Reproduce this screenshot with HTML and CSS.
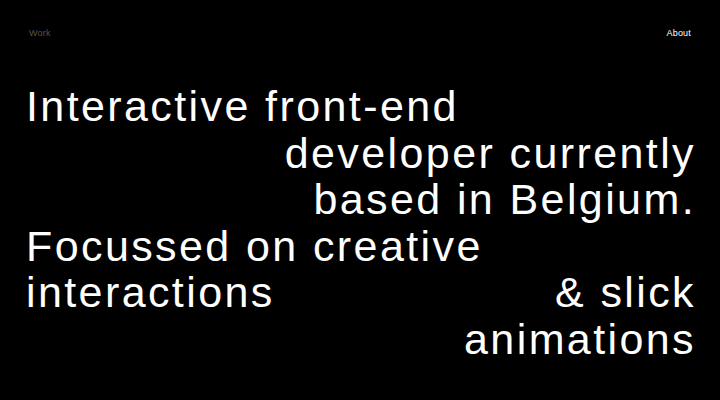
FILE: index.html
```html
<!DOCTYPE html>
<html lang="en">
<head>
<meta charset="utf-8">
<title>Portfolio</title>
<link rel="stylesheet" href="styles.css">
</head>
<body>
<div class="page">
  <header class="nav">
    <a class="nav-link nav-link--muted" href="#">Work</a>
    <a class="nav-link" href="#">About</a>
  </header>
  <h1 class="intro">
    <span class="line line--left">Interactive front-end</span>
    <span class="line line--right">developer currently</span>
    <span class="line line--right">based in Belgium.</span>
    <span class="line line--left">Focussed on creative</span>
    <span class="line line--split"><span>interactions</span><span>&amp; slick</span></span>
    <span class="line line--right">animations</span>
  </h1>
</div>
</body>
</html>
```

FILE: styles.css
```css
html, body {
  margin: 0;
  padding: 0;
  background: #000;
}

body {
  font-family: "Liberation Sans", Arial, sans-serif;
  color: #fff;
  width: 720px;
  height: 400px;
  overflow: hidden;
}

.page {
  padding: 0 26px;
}

.nav {
  display: flex;
  justify-content: space-between;
  align-items: center;
  height: 20px;
  padding: 23px 3px 0;
}

.nav-link {
  font-size: 9px;
  color: #fff;
  text-decoration: none;
  letter-spacing: 0.2px;
}

.nav-link--muted {
  color: #555;
}

.intro {
  margin: 40px 0 0;
  font-size: 43px;
  font-weight: 400;
  line-height: 46.5px;
  letter-spacing: 2.4px;
}

.line {
  display: flex;
}

.line--left {
  justify-content: flex-start;
}

.line--right {
  justify-content: flex-end;
  margin-right: -2px;
}

.line--split {
  justify-content: space-between;
  margin-right: -2px;
}
```
